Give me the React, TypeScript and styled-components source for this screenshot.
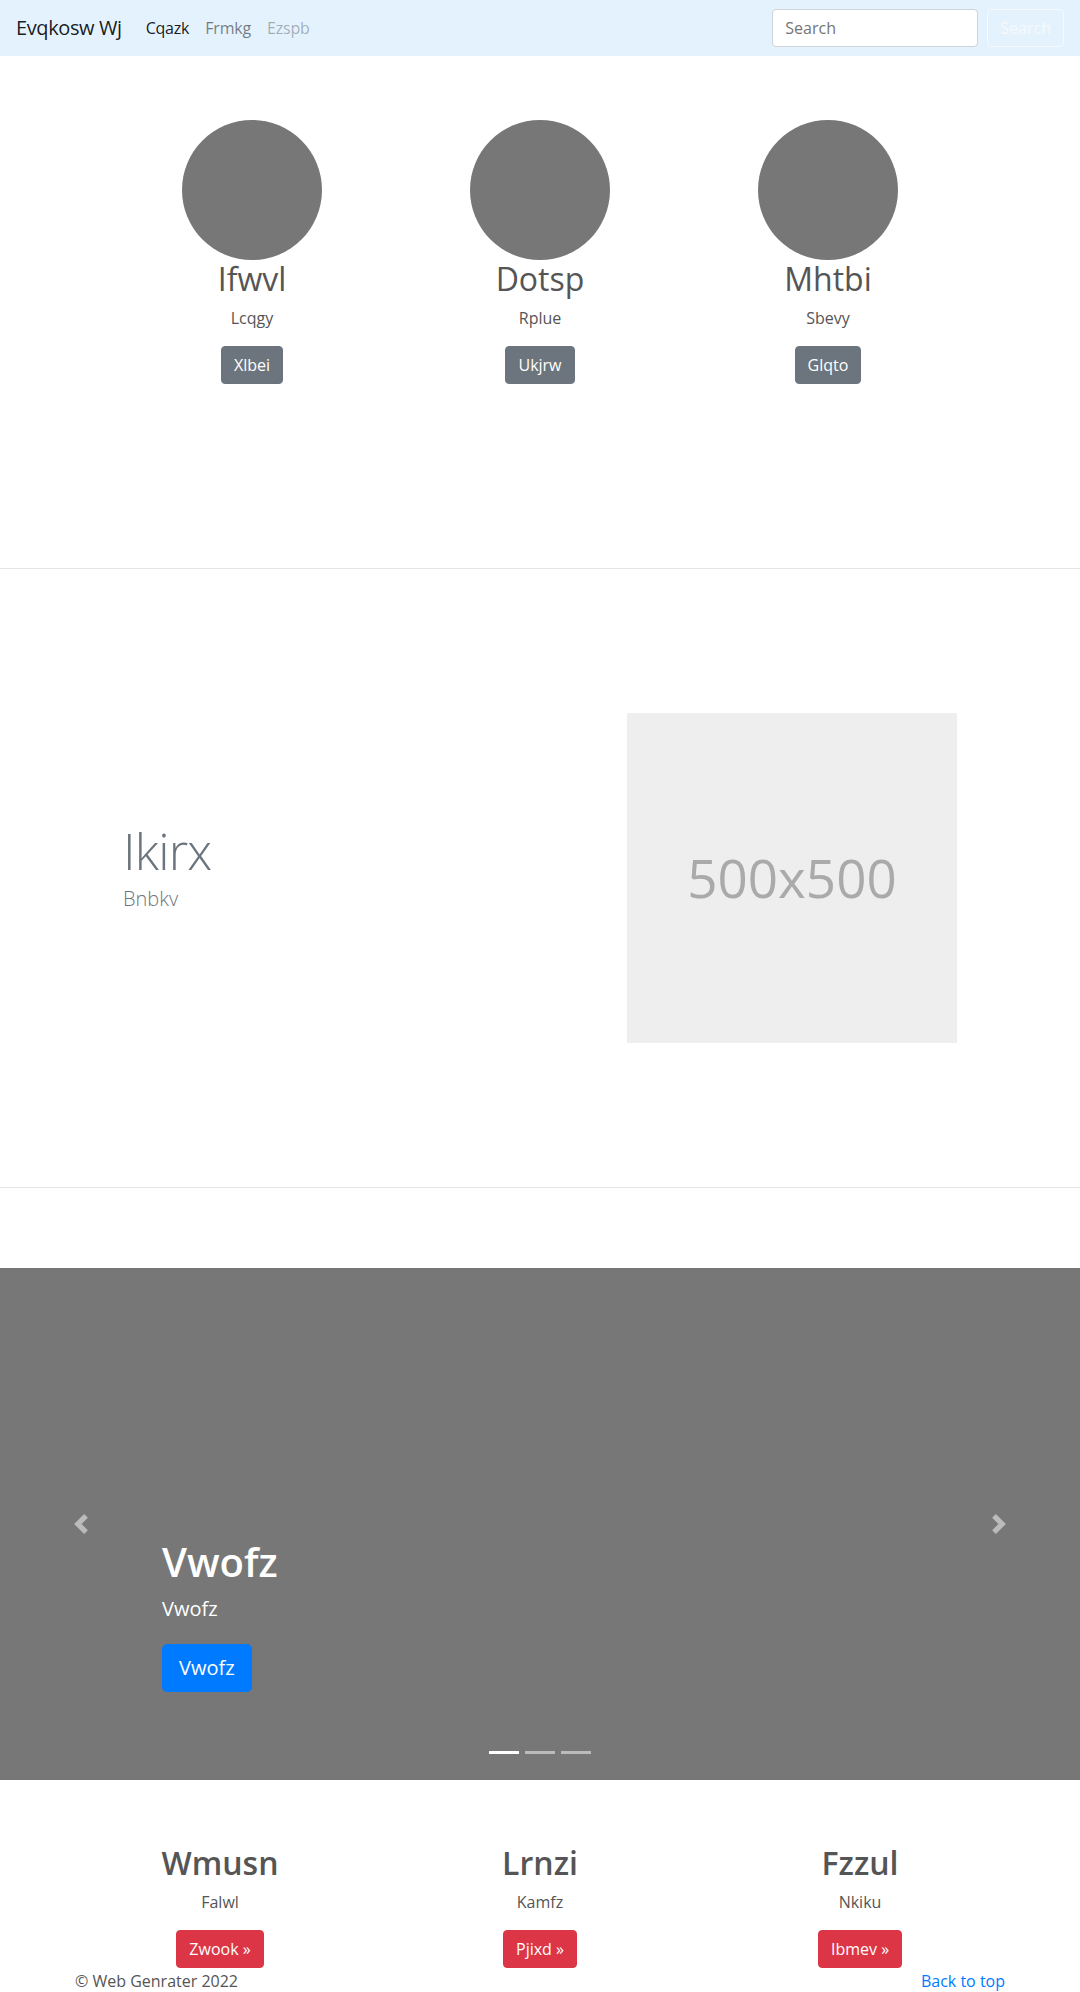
import styled, { createGlobalStyle } from 'styled-components';

const GlobalStyle = createGlobalStyle`
  * {
    box-sizing: border-box;
  }
  body {
    margin: 0;
    font-family: "Open Sans", "Noto Sans", "Liberation Sans", sans-serif;
    font-size: 16px;
    line-height: 1.5;
    color: #555555;
    background-color: #FFFFFF;
  }
`

const Navbar = styled.nav`
  height: 56px;
  padding: 8px 16px;
  display: flex;
  align-items: center;
  justify-content: space-between;
  background-color: #e3f2fd;
`

const NavLeft = styled.div`
  display: flex;
  align-items: center;
`

const Brand = styled.a`
  font-size: 20px;
  line-height: 30px;
  padding: 5px 0;
  margin-right: 16px;
  letter-spacing: -0.4px;
  color: rgba(0, 0, 0, 0.9);
  text-decoration: none;
`

const NavList = styled.ul`
  display: flex;
  margin: 0;
  padding: 0;
  list-style: none;
`

const NavLink = styled.a<{ $state: 'active' | 'normal' | 'disabled' }>`
  display: block;
  padding: 8px;
  line-height: 24px;
  letter-spacing: -0.2px;
  text-decoration: none;
  color: ${props =>
    props.$state === 'active' ? 'rgba(0, 0, 0, 0.9)' :
    props.$state === 'disabled' ? 'rgba(0, 0, 0, 0.3)' : 'rgba(0, 0, 0, 0.5)'};
`

const SearchForm = styled.form`
  display: flex;
  align-items: center;
  gap: 9px;
`

const SearchInput = styled.input`
  width: 206px;
  height: 38px;
  padding: 6px 12px;
  font-family: inherit;
  font-size: 16px;
  color: #495057;
  background-color: #FFFFFF;
  border: 1px solid #ced4da;
  border-radius: 4px;
  outline: none;

  ::placeholder {
    color: #6c757d;
  }
`

const OutlineButton = styled.button`
  height: 38px;
  padding: 6px 12px;
  font-family: inherit;
  font-size: 16px;
  line-height: 24px;
  color: #f8f9fa;
  background: transparent;
  border: 1px solid #f8f9fa;
  border-radius: 4px;
`

const Container = styled.div<{ $width: number }>`
  width: ${props => props.$width}px;
  margin: 0 auto;
`

const ThreeCols = styled.div`
  display: grid;
  grid-template-columns: repeat(3, 1fr);
`

const Col = styled.div`
  padding: 0 15px;
  text-align: center;
`

const TeamSection = styled.section`
  min-height: 512px;
  padding-top: 64px;
`

const Avatar = styled.div`
  width: 140px;
  height: 140px;
  margin: 0 auto;
  border-radius: 50%;
  background-color: #777777;
`

const ColTitle = styled.h2<{ $bold?: boolean }>`
  margin: 0 0 8px;
  font-size: 32px;
  line-height: 1.2;
  font-weight: ${props => (props.$bold ? 600 : 400)};
  color: #555555;
`

const ColText = styled.p`
  margin: 0 0 16px;
`

const Button = styled.button<{ $variant: 'secondary' | 'danger' | 'primary'; $large?: boolean }>`
  display: inline-block;
  font-family: inherit;
  font-size: ${props => (props.$large ? '20px' : '16px')};
  line-height: 1.5;
  padding: ${props => (props.$large ? '8px 16px' : '6px 12px')};
  border-radius: ${props => (props.$large ? '4.8px' : '4px')};
  color: #FFFFFF;
  ${props => props.$variant === 'secondary' && `
    background-color: #6c757d;
    border: 1px solid #6c757d;
  `}
  ${props => props.$variant === 'danger' && `
    background-color: #dc3545;
    border: 1px solid #dc3545;
  `}
  ${props => props.$variant === 'primary' && `
    background-color: #007bff;
    border: 1px solid #007bff;
  `}
`

const Divider = styled.hr<{ $below?: number }>`
  margin: 0 0 ${props => props.$below || 0}px;
  border: 0;
  border-top: 1px solid rgba(0, 0, 0, 0.1);
`

const FeaturetteSection = styled.section`
  padding: 144px 0;
`

const FeaturetteRow = styled.div`
  display: grid;
  grid-template-columns: 7fr 5fr;
  align-items: center;
`

const FeaturetteText = styled.div`
  padding: 0 15px 17px;
`

const FeaturetteHeading = styled.h2`
  margin: 0 0 8px;
  font-size: 50px;
  font-weight: 300;
  line-height: 1;
  letter-spacing: -0.8px;
  color: #6c757d;
`

const Lead = styled.p`
  margin: 0;
  font-size: 20px;
  font-weight: 300;
  color: #6c757d;
`

const FeaturetteMedia = styled.div`
  padding: 0 15px;
`

const Placeholder = styled.div`
  height: 330px;
  display: flex;
  align-items: center;
  justify-content: center;
  background-color: #eeeeee;
  color: #aaaaaa;
  font-size: 53px;
`

const Carousel = styled.div`
  position: relative;
  height: 512px;
  background-color: #777777;
`

const CarouselControl = styled.button<{ $side: 'left' | 'right' }>`
  position: absolute;
  top: 0;
  bottom: 0;
  ${props => props.$side}: 0;
  width: 15%;
  display: flex;
  align-items: center;
  justify-content: center;
  padding: 0;
  border: 0;
  background: none;
  opacity: 0.5;
`

const Caption = styled.div`
  position: absolute;
  left: 15%;
  right: 15%;
  bottom: 48px;
  padding-bottom: 20px;
  color: #FFFFFF;
`

const CaptionTitle = styled.h1`
  margin: 0 0 8px;
  font-size: 40px;
  font-weight: 600;
  line-height: 1.2;
`

const CaptionText = styled.p`
  margin: 0 0 20px;
  font-size: 20px;
`

const CaptionAction = styled.div`
  margin-bottom: 20px;
`

const Indicators = styled.ol`
  position: absolute;
  left: 15%;
  right: 15%;
  bottom: 26px;
  display: flex;
  justify-content: center;
  margin: 0;
  padding: 0;
  list-style: none;
`

const Indicator = styled.li<{ $active?: boolean }>`
  width: 30px;
  height: 3px;
  margin: 0 3px;
  background-color: ${props => (props.$active ? '#FFFFFF' : 'rgba(255, 255, 255, 0.5)')};
`

const FeatureSection = styled.section`
  padding-top: 64px;
`

const Footer = styled.footer`
  width: 960px;
  margin: 1px auto 0;
  padding: 0 15px;
  display: flex;
  justify-content: space-between;

  p {
    margin: 0;
  }
  a {
    color: #007bff;
    text-decoration: none;
  }
`

const ChevronIcon = ({ dir }: { dir: 'prev' | 'next' }) => (
  <svg width="20" height="20" viewBox="0 0 8 8" fill="#fff">
    {dir === 'prev'
      ? <path d="M5.25 0l-4 4 4 4 1.5-1.5L4.25 4l2.5-2.5L5.25 0z" />
      : <path d="M2.75 0l-1.5 1.5L3.75 4l-2.5 2.5L2.75 8l4-4-4-4z" />}
  </svg>
)

const team = [
  { name: 'Ifwvl', role: 'Lcqgy', action: 'Xlbei' },
  { name: 'Dotsp', role: 'Rplue', action: 'Ukjrw' },
  { name: 'Mhtbi', role: 'Sbevy', action: 'Glqto' },
];

const features = [
  { title: 'Wmusn', text: 'Falwl', action: 'Zwook »' },
  { title: 'Lrnzi', text: 'Kamfz', action: 'Pjixd »' },
  { title: 'Fzzul', text: 'Nkiku', action: 'Ibmev »' },
];

export default function App() {
  return (
    <>
      <GlobalStyle />
      <Navbar>
        <NavLeft>
          <Brand href="#">Evqkosw Wj</Brand>
          <NavList>
            <li><NavLink href="#" $state="active">Cqazk</NavLink></li>
            <li><NavLink href="#" $state="normal">Frmkg</NavLink></li>
            <li><NavLink href="#" $state="disabled">Ezspb</NavLink></li>
          </NavList>
        </NavLeft>
        <SearchForm onSubmit={e => e.preventDefault()}>
          <SearchInput type="search" placeholder="Search" />
          <OutlineButton type="submit">Search</OutlineButton>
        </SearchForm>
      </Navbar>

      <TeamSection>
        <Container $width={864}>
          <ThreeCols>
            {team.map(it => (
              <Col key={it.name}>
                <Avatar />
                <ColTitle>{it.name}</ColTitle>
                <ColText>{it.role}</ColText>
                <Button $variant="secondary">{it.action}</Button>
              </Col>
            ))}
          </ThreeCols>
        </Container>
      </TeamSection>

      <Divider />

      <FeaturetteSection>
        <Container $width={864}>
          <FeaturetteRow>
            <FeaturetteText>
              <FeaturetteHeading>Ikirx</FeaturetteHeading>
              <Lead>Bnbkv</Lead>
            </FeaturetteText>
            <FeaturetteMedia>
              <Placeholder>500x500</Placeholder>
            </FeaturetteMedia>
          </FeaturetteRow>
        </Container>
      </FeaturetteSection>

      <Divider $below={80} />

      <Carousel>
        <CarouselControl $side="left" aria-label="Previous">
          <ChevronIcon dir="prev" />
        </CarouselControl>
        <Caption>
          <CaptionTitle>Vwofz</CaptionTitle>
          <CaptionText>Vwofz</CaptionText>
          <CaptionAction>
            <Button $variant="primary" $large>Vwofz</Button>
          </CaptionAction>
        </Caption>
        <CarouselControl $side="right" aria-label="Next">
          <ChevronIcon dir="next" />
        </CarouselControl>
        <Indicators>
          <Indicator $active />
          <Indicator />
          <Indicator />
        </Indicators>
      </Carousel>

      <FeatureSection>
        <Container $width={960}>
          <ThreeCols>
            {features.map(it => (
              <Col key={it.title}>
                <ColTitle $bold>{it.title}</ColTitle>
                <ColText>{it.text}</ColText>
                <Button $variant="danger">{it.action}</Button>
              </Col>
            ))}
          </ThreeCols>
        </Container>
      </FeatureSection>

      <Footer>
        <p>© Web Genrater 2022</p>
        <p><a href="#">Back to top</a></p>
      </Footer>
    </>
  );
}
